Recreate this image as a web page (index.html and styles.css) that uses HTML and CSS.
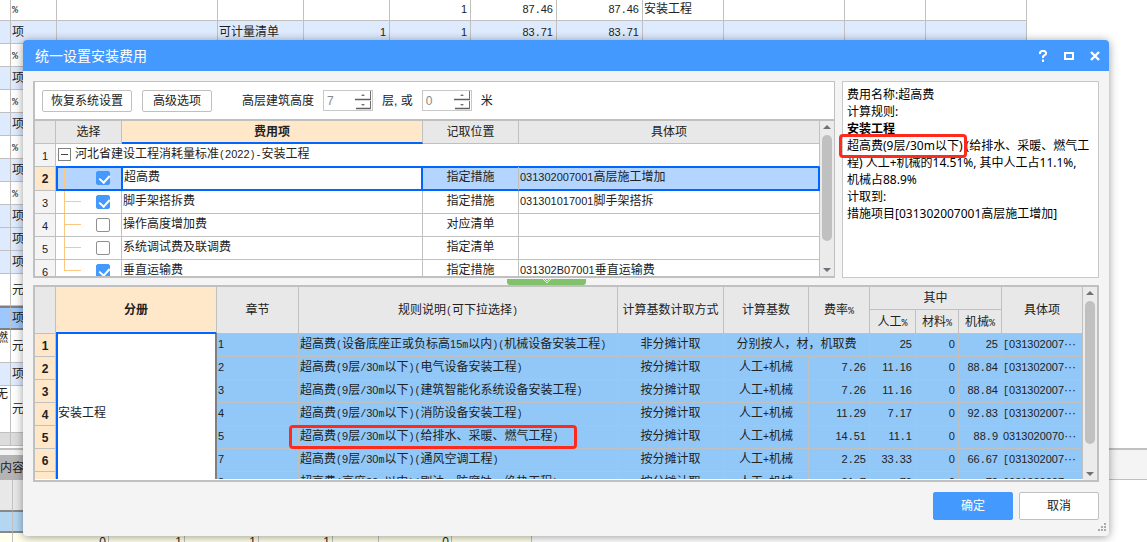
FILE: index.html
```html
<!DOCTYPE html>
<html lang="zh-CN">
<head>
<meta charset="utf-8">
<title>统一设置安装费用</title>
<link rel="stylesheet" href="styles.css">
</head>
<body>
<main class="workspace">
  <table class="sheet">
    <colgroup><col class="s0"><col class="s1"><col class="s2"><col class="s3"><col class="s3"><col class="s4"><col class="s3"><col class="s3"><col class="s4"><col class="s5"><col class="s4"><col class="s6"></colgroup>
    <tbody id="sheet"></tbody>
  </table>
  <div class="tabs"><button class="tab" type="button">内容</button></div>
  <table class="detail">
    <colgroup><col class="d0"><col class="d1"><col class="d2"><col class="d3"><col class="d3"><col class="d4"><col class="d5"><col class="d6"></colgroup>
    <tbody>
      <tr class="head"><td></td><td></td><td></td><td></td><td></td><td></td><td></td><td></td></tr>
      <tr class="current"><td></td><td></td><td></td><td></td><td></td><td></td><td></td><td></td></tr>
      <tr><td></td><td>0</td><td>1</td><td>1</td><td>1</td><td></td><td>0</td><td></td></tr>
    </tbody>
  </table>
</main>

<section class="dialog" role="dialog" aria-labelledby="title">
  <header class="titlebar">
    <h1 id="title">统一设置安装费用</h1>
    <button type="button" aria-label="帮助"><svg width="12" height="12" viewBox="0 0 12 12"><path d="M3 4V2.5L4.5 1h3L9 2.5V4L6 6.5V8M6 9.5V12" fill="none" stroke="#fff" stroke-width="2"/></svg></button>
    <button type="button" aria-label="最大化"><svg width="12" height="12" viewBox="0 0 12 12"><path d="M2 3h8v6H2z" fill="none" stroke="#fff" stroke-width="2"/></svg></button>
    <button type="button" aria-label="关闭"><svg width="12" height="12" viewBox="0 0 12 12"><path d="M2 2l8 8M10 2l-8 8" fill="none" stroke="#fff" stroke-width="2.4"/></svg></button>
  </header>

  <div class="body">
    <div class="top">
      <div class="fees">
        <div class="toolbar">
          <button class="btn wide" type="button">恢复系统设置</button>
          <button class="btn" type="button">高级选项</button>
          <label class="lead" for="floors">高层建筑高度</label>
          <span class="spin"><input id="floors" type="text" value="7"><svg width="17" height="19" viewBox="0 0 17 19"><path d="M0 8.5h16M1 17.5h15" stroke="#606060" stroke-width="1.5" fill="none"/><path d="M15.5 0v8M15.5 10v8" stroke="#707070" fill="none"/><path d="M6 5l2-2 2 2zM6 13l2 2 2-2z" fill="#777"/></svg></span>
          <label for="metres">层, 或</label>
          <span class="spin"><input id="metres" type="text" value="0"><svg width="17" height="19" viewBox="0 0 17 19"><path d="M0 8.5h16M1 17.5h15" stroke="#606060" stroke-width="1.5" fill="none"/><path d="M15.5 0v8M15.5 10v8" stroke="#707070" fill="none"/><path d="M6 5l2-2 2 2zM6 13l2 2 2-2z" fill="#777"/></svg></span>
          <span class="unit">米</span>
        </div>
        <div class="view">
          <div class="clip">
            <table class="grid">
              <colgroup><col class="f0"><col class="f1"><col class="f2"><col class="f3"><col></colgroup>
              <thead><tr><th></th><th>选择</th><th class="active">费用项</th><th>记取位置</th><th>具体项</th></tr></thead>
              <tbody id="fees"></tbody>
            </table>
          </div>
          <div class="scroll"><i class="up"></i><i class="thumb"></i><i class="down"></i></div>
        </div>
      </div>
      <aside class="info">
        <p>费用名称:超高费</p>
        <p>计算规则:</p>
        <p><b>安装工程</b></p>
        <p class="rule"><span class="mark">超高费(9层/30m以下)</span> (给排水、采暖、燃气工<br>程) 人工+机械的14.51%, 其中人工占11.1%,<br>机械占88.9%</p>
        <p>计取到:</p>
        <p>措施项目[031302007001高层施工增加]</p>
      </aside>
    </div>

    <div class="splitter"><button type="button" aria-label="折叠"><svg width="10" height="6" viewBox="0 0 10 6"><path d="M1 0l4 4 4-4M3 0l2 2 2-2" fill="none" stroke="#d9f0d2"/></svg></button></div>

    <div class="rules">
      <div class="clip">
        <table class="grid">
          <colgroup><col class="f0"><col class="r1"><col class="r2"><col><col class="r4"><col class="r5"><col class="r6"><col class="r7"><col class="r8"><col class="r8"><col class="r10"></colgroup>
          <thead>
            <tr><th rowspan="2"></th><th rowspan="2" class="active">分册</th><th rowspan="2">章节</th><th rowspan="2" data-t="规则说明(可下拉选择)"></th><th rowspan="2">计算基数计取方式</th><th rowspan="2">计算基数</th><th rowspan="2" data-t="费率%"></th><th colspan="3">其中</th><th rowspan="2">具体项</th></tr>
            <tr class="sub"><th data-t="人工%"></th><th data-t="材料%"></th><th data-t="机械%"></th></tr>
          </thead>
          <tbody id="rules"></tbody>
        </table>
      </div>
      <div class="scroll"><i class="up"></i><i class="thumb"></i><i class="down"></i></div>
    </div>

    <footer class="actions">
      <button class="primary" type="button">确定</button>
      <button type="button">取消</button>
      <svg class="grip" width="9" height="9" viewBox="0 0 9 9"><path d="M6 0h2v2H6zM3 3h2v2H3zM6 3h2v2H6zM0 6h2v2H0zM3 6h2v2H3zM6 6h2v2H6z" fill="#aaa"/></svg>
    </footer>
  </div>
</section>
<script src="app.js"></script>
</body>
</html>
```
FILE: styles.css
```css
* { box-sizing: border-box; }
body {
  margin: 0;
  height: 100vh;
  overflow: hidden;
  position: relative;
  background: #fff;
  color: #222;
  font: 12px/18px "Liberation Sans", "Noto Sans CJK SC", sans-serif;
}
button, input { font: inherit; color: inherit; margin: 0; padding: 0; }
table { border-spacing: 0; table-layout: fixed; }
td, th { padding: 0; font-weight: normal; white-space: nowrap; overflow: hidden; }
.n { font: 11px/12px "Liberation Sans", sans-serif; }
.m { font: 10px/12px "Liberation Mono", monospace; }

/* Background worksheet */
.sheet { width: 1027px; }
.s0 { width: 11px; } .s1 { width: 46px; } .s2 { width: 161px; } .s3 { width: 86px; }
.s4 { width: 81px; } .s5 { width: 121px; } .s6 { width: 101px; }
.sheet td { height: 23px; line-height: 20px; border-right: 1px solid #c0c0c0; border-bottom: 1px solid #c0c0c0; text-align: right; padding: 0 3px 0 1px; }
.sheet td:nth-child(1) { padding: 0 3px 0 0; direction: rtl; vertical-align: top; line-height: 16px; }
.sheet td:nth-child(2), .sheet td:nth-child(4), .sheet td:nth-child(9) { text-align: left; padding-left: 1px; }
.sheet .first td { height: 21px; line-height: 16px; padding-bottom: 3px; }
.sheet .blue td { background: #deeafe; }
.sheet .short td { height: 32px; }
.sheet .tall td { height: 33px; }
.sheet .taller td { height: 47px; line-height: 16px; }
.sheet .picked td { background: #9cc8ff; border-bottom: 2px solid #808080; height: 24px; border-top: 2px solid #808080; line-height: 18px; }
.sheet .total td { background: #dcdcdc; height: 13px; }
.tabs { margin-top: 2px; height: 32px; padding-top: 5px; border-top: 2px solid #c0c0c0; background: #f4f4f4; border-bottom: 1px solid #c0c0c0; }
.tab { border: 0; background: #b4b4b4; height: 25px; width: 60px; text-align: left; display: block; }
.detail { width: 532px; }
.d0 { width: 13px; } .d1 { width: 96px; } .d2 { width: 76px; } .d3 { width: 74px; }
.d4 { width: 46px; } .d5 { width: 73px; } .d6 { width: 80px; }
.detail td { height: 23px; background: #ffffeb; border-right: 1px solid #c0c0c0; text-align: right; padding-right: 2px; vertical-align: top; }
.detail .head td { height: 32px; background: #e8e8e8; border-bottom: 2px solid #888; }
.detail .current td { height: 21px; background: #b3d7f3; border-bottom: 2px solid #888; }

/* Dialog window */
.dialog {
  position: absolute;
  top: 40px;
  left: 23px;
  right: 38px;
  background: #f4f4f4;
  border-radius: 4px;
  box-shadow: 0 1px 10px rgba(0, 0, 0, .4);
}
.titlebar { display: flex; align-items: center; height: 31px; gap: 6px; padding: 0 4px 0 12px; background: #4499ff; border-radius: 4px 4px 0 0; color: #fff; }
.titlebar h1 { flex: 1; margin: 0; font-size: 14px; font-weight: normal; line-height: 30px; }
.titlebar button { width: 20px; height: 20px; border: 0; background: none; display: grid; place-items: center; }
.body { padding: 10px 10px 16px; }
.top { display: flex; gap: 7px; }
.fees { flex: 1; min-width: 0; border: 1px solid #c0c0c0; border-left-width: 2px; border-bottom-width: 2px; background: #fff; }
.toolbar { display: flex; align-items: center; height: 39px; padding-left: 7px; border-bottom: 2px solid #c0c0c0; }
.btn { width: 70px; height: 22px; border: 1px solid #c0c0c0; border-radius: 2px; background: #fff; }
.btn.wide { width: 90px; margin-right: 10px; }
.toolbar label { margin: 0 9px; }
.toolbar .lead { margin: 0 9px 0 30px; }
.spin { display: flex; width: 50px; height: 21px; border: 1px solid #c8c8c8; }
.spin input { width: 31px; border: 0; padding-left: 3px; color: #888; background: #fff; outline: 0; }
.unit { margin-left: 9px; }
.view { display: flex; height: 155px; }
.clip { flex: 1; min-width: 0; overflow: hidden; }

/* Data grids */
.grid { width: 100%; }
.grid td, .grid th { height: 23px; line-height: 20px; border-right: 1px solid #c0c0c0; border-bottom: 1px solid #c0c0c0; }
.grid td { padding-bottom: 2px; }
.grid th { background: #e8e8e8; text-align: center; }
.grid th.active { background: #ffe8ca; font-weight: bold; border-bottom: 2px solid #0066ff; }
.grid td.no { background: #f4f4f4; text-align: center; padding: 1px 0 0; }
.grid td.no.hot { background: #ffe8ca; font-weight: bold; }
.no.hot .n { font: bold 12px/14px "Liberation Sans", sans-serif; }
.c { text-align: center; }
.r { text-align: right; padding-right: 3px; }
.l { text-align: left; padding-left: 1px; }
.f0 { width: 21px; } .f1 { width: 66px; } .f2 { width: 301px; } .f3 { width: 96px; }
.r1 { width: 161px; } .r2 { width: 82px; } .r4 { width: 106px; } .r5 { width: 85px; }
.r6 { width: 61px; } .r7 { width: 46px; } .r8 { width: 43px; } .r10 { width: 81px; }
.tree {
  text-align: right;
  padding-right: 11px;
  background: linear-gradient(#fcc880, #fcc880) 8px 0 / 1px 100% no-repeat, linear-gradient(#fcc880, #fcc880) 8px 10px / 17px 1px no-repeat;
}
.tree.last { background-size: 1px 11px, 17px 1px; }
.root-row { display: flex; align-items: center; gap: 4px; padding-left: 2px; }
.toggle { width: 13px; height: 13px; border: 1px solid #808080; background: linear-gradient(#444, #444) center / 7px 1px no-repeat #fff; }
.tick { appearance: none; display: inline-block; vertical-align: middle; position: relative; width: 14px; height: 14px; border: 1px solid #909090; border-radius: 2px; background: #fff; }
.tick:checked { border-color: #4499ff; background: #4499ff; }
.tick:checked::after { content: ""; position: absolute; left: 4px; top: 1px; width: 5px; height: 8px; border: solid #fff; border-width: 0 2px 2px 0; transform: rotate(42deg); }
.grid .sel td:not(.no) { border-bottom: 2px solid #0066ff; background-color: #b3d5ff; box-shadow: inset 0 1px #0066ff; }
.grid .above td:not(.no) { border-bottom-color: #0066ff; }
.grid .sel .tree { border-left: 2px solid #0066ff; border-right: 1px solid #0066ff; padding-right: 11px; background-position: 6px 0, 6px 10px; }
.grid .sel td.name:not(.no) { background: #fff; border-left: 1px solid #0066ff; border-right: 2px solid #0066ff; }
.grid .sel .name { padding-left: 1px; }
.grid .sel td:last-child { border-right: 2px solid #0066ff; }

.scroll { width: 14px; background: #ebebeb; display: flex; flex-direction: column; align-items: center; padding: 4px 0; }
.up, .down { border: 4px solid transparent; border-top: 0; border-bottom: 4px solid #707078; }
.down { border-bottom: 0; border-top: 4px solid #707078; margin-top: auto; }
.thumb { width: 10px; margin-top: 6px; height: 106px; border-radius: 5px; background: #c0c0c0; }

.info { width: 257px; border: 1px solid #c8c8c8; background: #fff; padding: 4px 4px; font: 12px/17px "Noto Sans", "Noto Sans CJK SC", sans-serif; color: #000; white-space: nowrap; }
.info p { margin: 0; }
.mark, .circled { position: relative; }
.mark::after, .circled::after { content: ""; position: absolute; border: 3px solid #ff2a1c; border-radius: 4px; }
.mark::after { inset: -3px -5px -4px -8px; }
.circled::after { inset: -4px -18px -6px -11px; }
.grid .note { overflow: visible; }

.splitter { height: 7px; padding: 1px 0 0 474px; }
.splitter button { display: grid; place-items: center; width: 79px; height: 6px; border: 0; border-radius: 0 0 3px 3px; background: #80c26a; }
.rules { display: flex; height: 197px; border: 2px solid #c0c0c0; background: #fff; }
.rules .clip { margin-bottom: 1px; }
.rules .thumb { height: 143px; margin-top: 6px; }
.rules td { background: #92c8f8; }
.rules .grid th { height: 24px; }
.rules .grid thead tr:first-child th { height: 23px; }
.rules .grid td.book { background: #fff; border-left: 2px solid #0066ff; border-right: 2px solid #808080; }

.actions { position: relative; display: flex; justify-content: flex-end; gap: 6px; padding-top: 10px; }
.actions button { width: 80px; height: 28px; border: 1px solid #c0c0c0; border-radius: 2px; background: #fff; }
.actions .primary { border-color: #4499ff; background: #4499ff; color: #fff; }
.grip { position: absolute; right: -8px; bottom: -12px; }
```
FILE: app.js
```js
function fmt(text) {
  return String(text).replace(/[0-9A-Z]+|[()%+\/.\-m\[\]]+/g, function (run) {
    return '<span class="' + (/[0-9A-Z]/.test(run) ? 'n' : 'm') + '">' + run + '</span>';
  });
}
function td(text, cls, attrs) {
  return '<td class="' + (cls || '') + '" ' + (attrs || '') + '>' + fmt(text) + '</td>';
}

document.querySelectorAll('[data-t]').forEach(function (el) { el.innerHTML = fmt(el.dataset.t); });

var sheet = [
  ['first', '', '%', '', '', '', '1', '87.46', '87.46', '安装工程'],
  ['blue', '', '项', '', '可计量清单', '1', '1', '83.71', '83.71'],
  ['', '', '%'], ['blue', '', '项'], ['', '', '%'], ['blue', '', '项'],
  ['', '', '%'], ['blue', '', '项'], ['', '', '%'], ['blue', '', '项'],
  ['blue', '', '项'], ['blue', '', '项'], ['short', '', '元'], ['picked', '', '项'],
  ['tall', '燃', '元'], ['blue', '', '项'], ['taller', '无', '元'], ['total']
];
document.getElementById('sheet').innerHTML = sheet.map(function (row) {
  var cells = '';
  for (var i = 1; i <= 12; i++) cells += td(row[i] || '');
  return '<tr class="' + row[0] + '">' + cells + '</tr>';
}).join('');

var fees = [
  [true, '超高费', '指定措施', '031302007001高层施工增加'],
  [true, '脚手架搭拆费', '指定措施', '031301017001脚手架搭拆'],
  [false, '操作高度增加费', '对应清单', ''],
  [false, '系统调试费及联调费', '指定清单', ''],
  [true, '垂直运输费', '指定措施', '031302B07001垂直运输费']
];
document.getElementById('fees').innerHTML =
  '<tr class="above">' + td(1, 'no') + '<td colspan="4"><div class="root-row"><i class="toggle"></i><span>' +
  fmt('河北省建设工程消耗量标准(2022)-安装工程') + '</span></div></td></tr>' +
  fees.map(function (f, i) {
    return '<tr class="' + (i ? '' : 'sel') + '">' + td(i + 2, i ? 'no' : 'no hot') +
      '<td class="tree' + (i === 4 ? ' last' : '') + '"><input class="tick" type="checkbox" aria-label="' + f[1] + '"' +
      (f[0] ? ' checked' : '') + '></td>' + td(f[1], 'name l') + td(f[2], 'c') + td(f[3], 'l') + '</tr>';
  }).join('');

var rules = [
  [1, '超高费(设备底座正或负标高15m以内)(机械设备安装工程)', '非分摊计取', '分别按人，材，机取费', null, '25', '25', '[031302007···'],
  [2, '超高费(9层/30m以下)(电气设备安装工程)', '按分摊计取', '人工+机械', '7.26', '11.16', '88.84', '[031302007···'],
  [3, '超高费(9层/30m以下)(建筑智能化系统设备安装工程)', '按分摊计取', '人工+机械', '7.26', '11.16', '88.84', '[031302007···'],
  [4, '超高费(9层/30m以下)(消防设备安装工程)', '按分摊计取', '人工+机械', '11.29', '7.17', '92.83', '[031302007···'],
  [5, '超高费(9层/30m以下)(给排水、采暖、燃气工程)', '按分摊计取', '人工+机械', '14.51', '11.1', '88.9', '0313020070···'],
  [7, '超高费(9层/30m以下)(通风空调工程)', '按分摊计取', '人工+机械', '2.25', '33.33', '66.67', '[031302007···'],
  [8, '超高费(高度20m以内)(刷油、防腐蚀、绝热工程)', '按分摊计取', '人工+机械', '21.7', '70', '70', '[031302007···']
];
document.getElementById('rules').innerHTML = rules.map(function (r, i) {
  var desc = i === 4 ? '<td class="l note"><span class="circled">' + fmt(r[1]) + '</span></td>' : td(r[1], 'l');
  var base = r[4] === null ? td(r[3], 'c', 'colspan="2"') : td(r[3], 'c') + td(r[4], 'r');
  return '<tr>' + td(i + 1, 'no hot') + (i ? '' : td('安装工程', 'book', 'rowspan="7"')) +
    td(r[0], 'l') + desc + td(r[2], 'c') + base + td(r[5], 'r') + td(0, 'r') + td(r[6], 'r') + td(r[7], 'l') + '</tr>';
}).join('');
```
